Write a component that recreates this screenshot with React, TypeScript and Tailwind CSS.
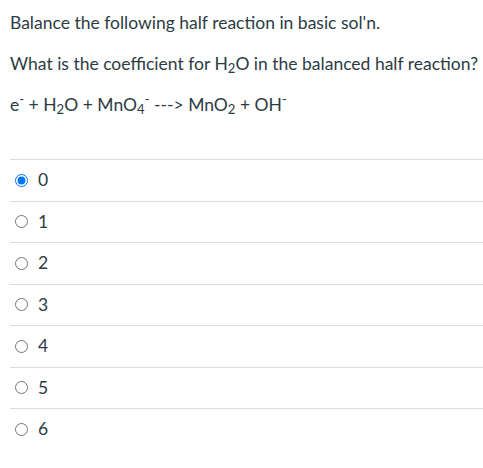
import React from "react";

const options = ["0", "1", "2", "3", "4", "5", "6"];

export default function App() {
  return (
    <div
      className="w-[483px] h-[468px] bg-white text-[#2d3b45] text-[17.5px] leading-[26px] pl-[10px] pt-[10px]"
      style={{ fontFamily: "Lato, 'Open Sans', sans-serif" }}
    >
      <p>Balance the following half reaction in basic sol'n.</p>
      <p className="mt-[15px]">
        What is the coefficient for H<sub className="leading-none">2</sub>O in the balanced half reaction?
      </p>
      <p className="mt-[15px]">
        e<sup className="leading-none">-</sup> + H<sub className="leading-none">2</sub>O + MnO
        <sub className="leading-none">4</sub>
        <sup className="leading-none">-</sup> ---&gt; MnO<sub className="leading-none">2</sub> + OH
        <sup className="leading-none">-</sup>
      </p>
      <div className="mt-[41px]">
        {options.map((o, i) => (
          <label
            key={o}
            className="flex items-center h-[41.5px] border-t border-[#dcdcdc]"
          >
            <input
              type="radio"
              name="ans"
              defaultChecked={i === 0}
              className="m-0 ml-[5px] w-[13px] h-[13px]"
            />
            <span className="ml-[10px]">{o}</span>
          </label>
        ))}
      </div>
    </div>
  );
}
